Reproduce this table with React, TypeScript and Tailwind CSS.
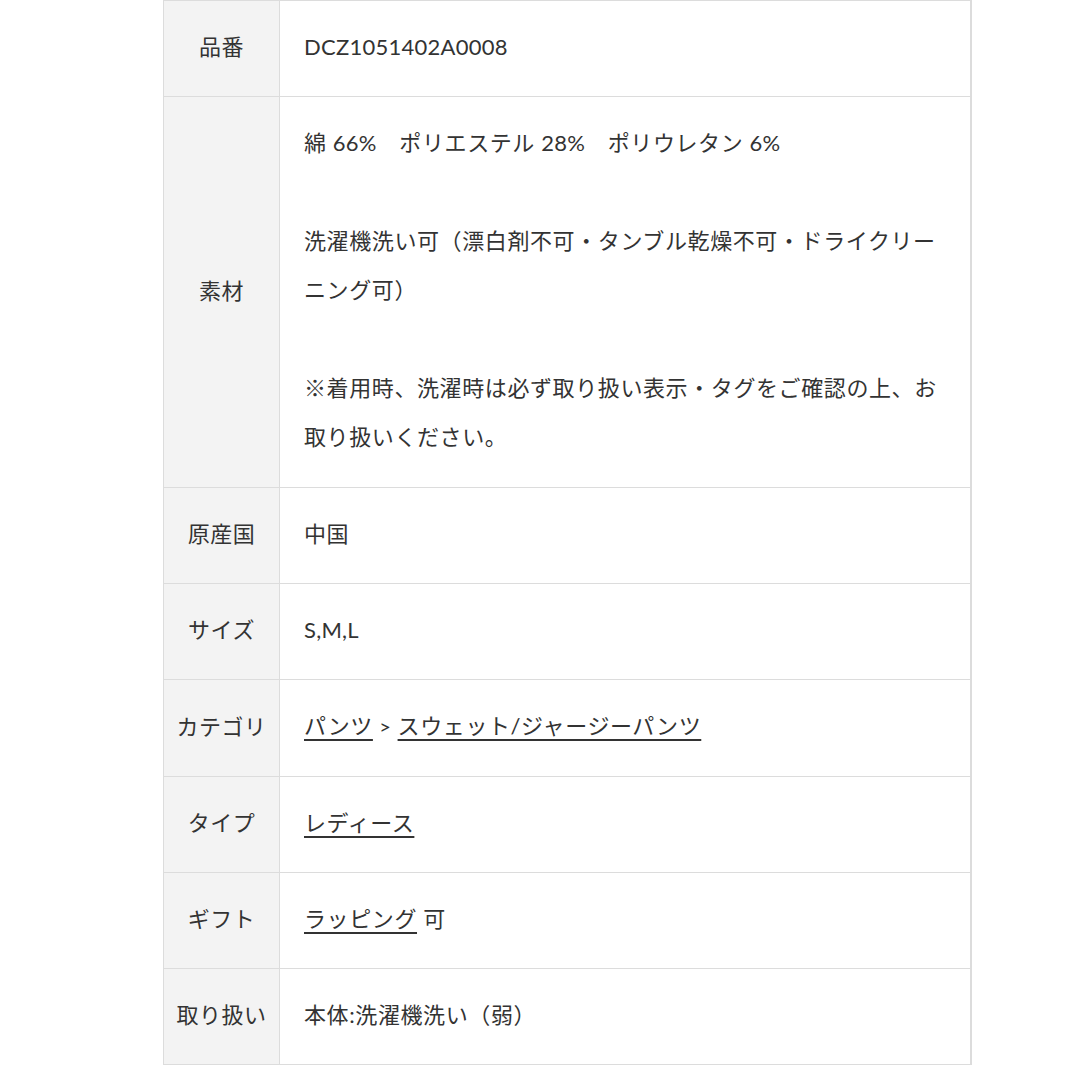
const font = "font-['Lato','Noto_Sans_CJK_JP',sans-serif]";

// 英数字はやや詰める
const L = ({ children }: { children: React.ReactNode }) => <span className="tracking-[0.25px]">{children}</span>;

const rows: { label: string; body: React.ReactNode; tall?: boolean }[] = [
  { label: "品番", body: <L>DCZ1051402A0008</L> },
  {
    label: "素材",
    tall: true,
    body: (
      <>
        <p>
          綿 <L>66%</L>　ポリエステル <L>28%</L>　ポリウレタン <L>6%</L>
        </p>
        <p>&nbsp;</p>
        <p>洗濯機洗い可（漂白剤不可・タンブル乾燥不可・ドライクリーニング可）</p>
        <p>&nbsp;</p>
        <p>※着用時、洗濯時は必ず取り扱い表示・タグをご確認の上、お取り扱いください。</p>
      </>
    ),
  },
  { label: "原産国", body: "中国" },
  { label: "サイズ", body: <L>S,M,L</L> },
  {
    label: "カテゴリ",
    body: (
      <>
        <a className="underline underline-offset-[5px]">パンツ</a> <span className="text-[20px]">&gt;</span>{" "}
        <a className="underline underline-offset-[5px]">スウェット/ジャージーパンツ</a>
      </>
    ),
  },
  { label: "タイプ", body: <a className="underline underline-offset-[5px]">レディース</a> },
  {
    label: "ギフト",
    body: (
      <>
        <a className="underline underline-offset-[5px]">ラッピング</a> 可
      </>
    ),
  },
  { label: "取り扱い", body: "本体:洗濯機洗い（弱）" },
];

export default function App() {
  return (
    <div className={`min-h-[1080px] bg-white ${font} text-[22px] tracking-[0.6px] text-[#333]`}>
      <div className="ml-[163px] w-[809px] border border-[#dcdcdc] border-r-2">
        {rows.map((r, i) => (
          <div key={r.label} className={`flex ${i < rows.length - 1 ? "border-b border-[#dcdcdc]" : ""}`}>
            <div className="flex w-[116px] shrink-0 items-center justify-center border-r border-[#dcdcdc] bg-[#f3f3f3] pb-[4px] leading-[49px] tracking-[0.5px]">
              {r.label}
            </div>
            <div className={`flex-1 px-6 leading-[49px] ${r.tall ? "pt-[21px] pb-[26px]" : "pt-[21px] pb-[25px]"}`}>
              {r.body}
            </div>
          </div>
        ))}
      </div>
    </div>
  );
}
